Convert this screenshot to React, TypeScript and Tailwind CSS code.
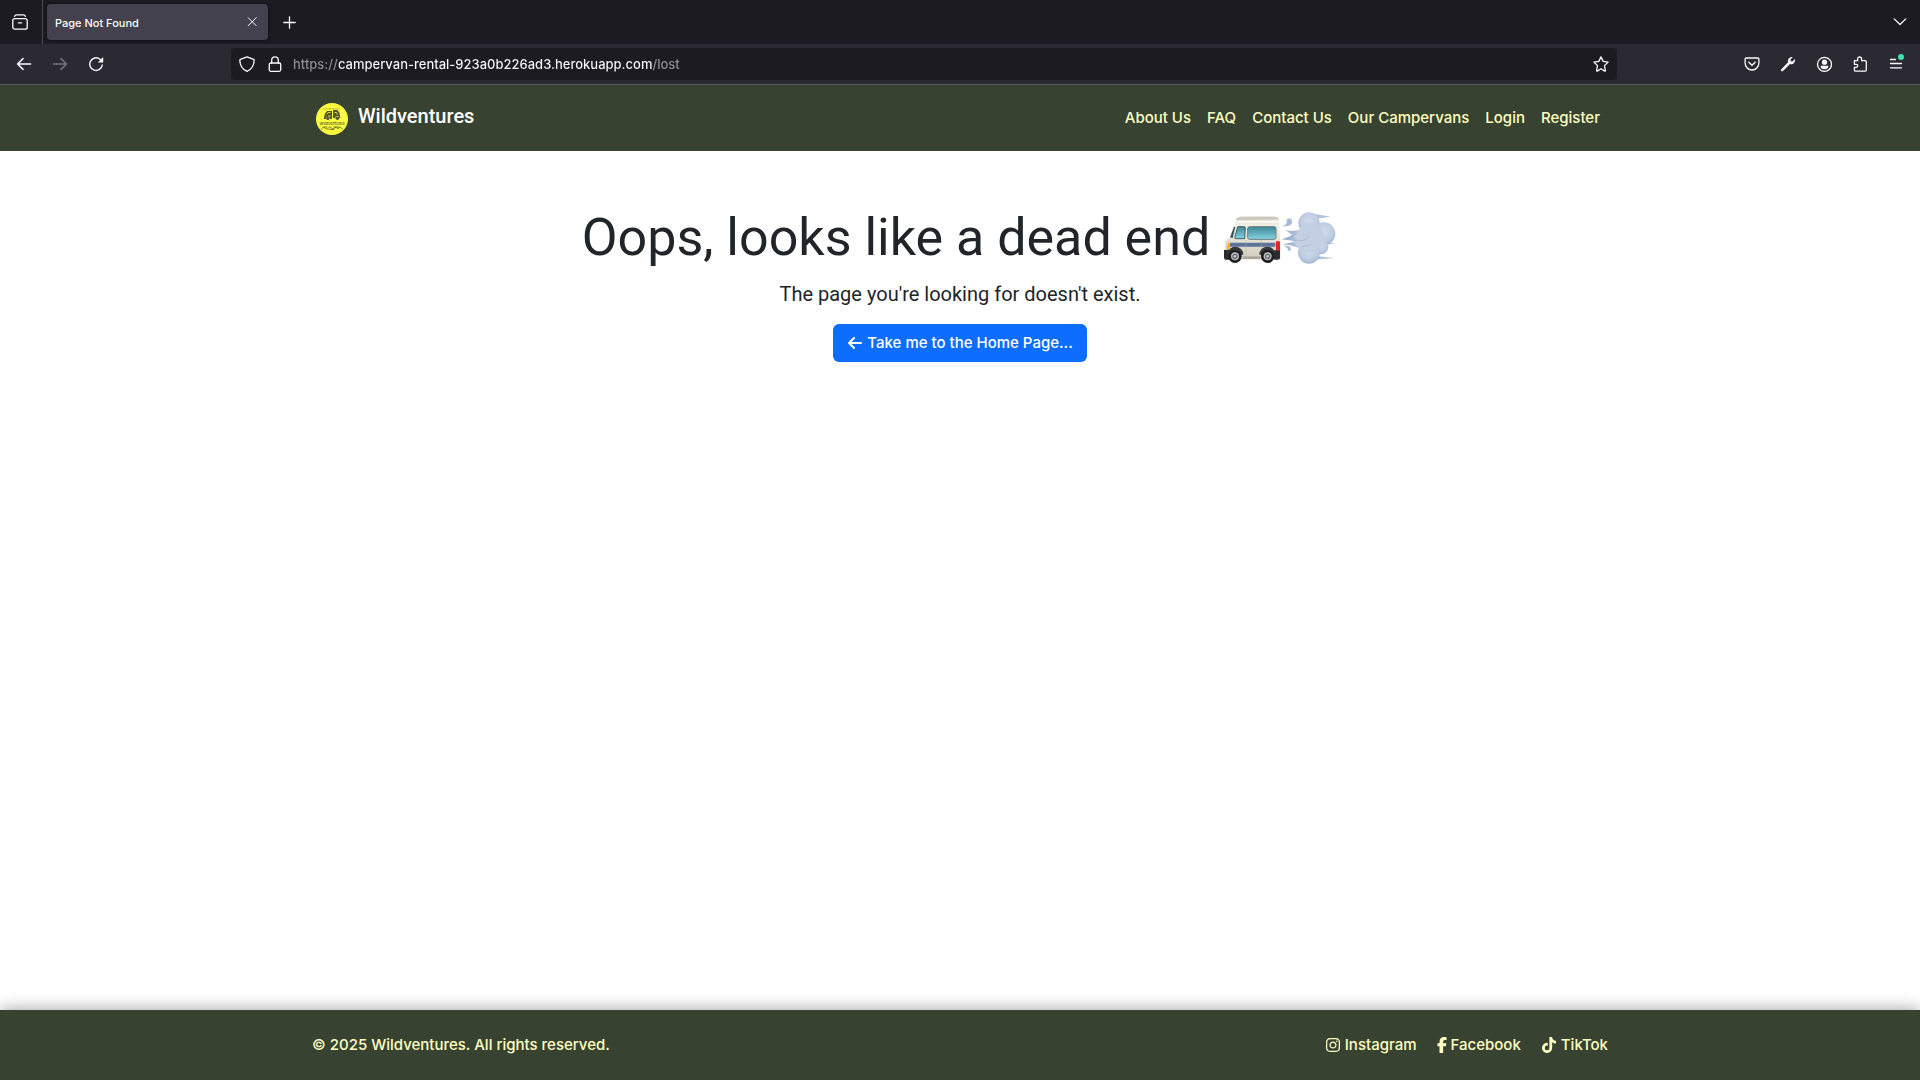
import type { ReactNode, SVGProps } from "react";
import { FaFacebookF, FaInstagram, FaTiktok } from "react-icons/fa6";

function Icon({ children, ...props }: SVGProps<SVGSVGElement> & { children: ReactNode }) {
  return (
    <svg
      viewBox="0 0 16 16"
      fill="none"
      stroke="currentColor"
      strokeWidth="1.3"
      strokeLinecap="round"
      strokeLinejoin="round"
      className="size-4 shrink-0"
      aria-hidden="true"
      {...props}
    >
      {children}
    </svg>
  );
}

function IconButton({ label, disabled, children }: { label: string; disabled?: boolean; children: ReactNode }) {
  return (
    <button
      type="button"
      aria-label={label}
      disabled={disabled}
      className="flex size-8 shrink-0 items-center justify-center rounded text-[#fbfbfe] hover:bg-white/10 disabled:text-[#77767d]"
    >
      {children}
    </button>
  );
}

function TabStrip() {
  return (
    <div className="flex h-11 items-center bg-[#1c1b22] text-[#fbfbfe]">
      <div className="flex h-full items-center border-r border-[#4a4952] pr-1.5 pl-1">
        <IconButton label="Recent browsing">
          <Icon>
            <rect x=".8" y="4.6" width="14.4" height="10.6" rx="2" />
            <path d="M2.6 2.4Q3 .8 4.6.8h6.8q1.6 0 2 1.6M6.4 8.8h3.2" />
          </Icon>
        </IconButton>
      </div>
      <div className="ml-1 flex h-9 w-[221px] items-center justify-between rounded bg-[#42414d] px-2 shadow-[0_0_3px_rgba(0,0,0,0.6)]">
        <span className="pt-0.5 text-[11px] font-medium">Page Not Found</span>
        <button type="button" aria-label="Close tab" className="flex size-4 items-center justify-center">
          <Icon strokeWidth="1">
            <path d="m4.2 3.7 8 8m0-8-8 8" />
          </Icon>
        </button>
      </div>
      <div className="ml-1.5">
        <IconButton label="New tab">
          <Icon strokeWidth="1.3">
            <path d="M7.5 2.8v11.400M1.800 8.500h11.400" />
          </Icon>
        </IconButton>
      </div>
      <div className="mr-1 ml-auto">
        <IconButton label="List all tabs">
          <Icon>
            <path d="m2.200 4.900 5.800 5.600 5.800-5.600" />
          </Icon>
        </IconButton>
      </div>
    </div>
  );
}

function Toolbar() {
  return (
    <div className="flex h-[41px] items-center border-b border-[#5b5968] bg-[#2b2a33] px-2">
      <div className="flex w-[223px] gap-1">
        <IconButton label="Back">
          <Icon strokeWidth="1.5">
            <path d="M14.600 8H1.600M7 2.600 1.600 8 7 13.400" />
          </Icon>
        </IconButton>
        <IconButton label="Forward" disabled>
          <Icon strokeWidth="1.5">
            <path d="M1.400 8h13M9 2.600 14.400 8 9 13.400" />
          </Icon>
        </IconButton>
        <IconButton label="Reload">
          <Icon strokeWidth="1.4">
            <path d="M14.300 9A6.300 6.300 0 1 1 12 3.200l1 .9" />
            <path d="M15.200 1v5.400H9.800z" fill="currentColor" stroke="none" />
          </Icon>
        </IconButton>
      </div>
      <div className="flex h-8 flex-1 items-center rounded bg-[#1c1b22] px-2 text-[#fbfbfe]">
        <button type="button" aria-label="Tracking protection" className="flex">
          <Icon>
            <path d="M8 .9 1.400 3.300c-.4.2-.6.5-.6.900C1 9.800 3.200 13.200 8 15.300c4.800-2.100 7-5.500 7.200-11.100 0-.4-.2-.7-.6-.9z" />
          </Icon>
        </button>
        <button type="button" aria-label="Site information" className="ml-3 flex">
          <Icon>
            <rect x="2.300" y="7" width="11.400" height="8.300" rx="1.500" />
            <path d="M4.700 7V4.200a3.300 3.300 0 0 1 6.600 0V7" />
          </Icon>
        </button>
        <input
          type="text"
          aria-label="Address"
          defaultValue="https://campervan-rental-923a0b226ad3.herokuapp.com/lost"
          className="ml-2.5 h-8 min-w-0 flex-1 bg-[linear-gradient(to_right,#8f8f94_45px,#fbfbfe_45px,#fbfbfe_359px,#8f8f94_359px)] bg-clip-text text-[13px] font-medium text-transparent caret-white outline-none"
        />
        <button type="button" aria-label="Bookmark this page" className="flex">
          <Icon>
            <path d="m8 .9 2.200 4.500 4.900.7-3.600 3.500.9 4.900q0 .8-.7.600L8 12.800l-3.700 2.300q-.7.200-.7-.6l.9-4.900L.9 6.100l4.900-.7z" />
          </Icon>
        </button>
      </div>
      <div className="ml-[119px] flex gap-1">
        <IconButton label="Save to Pocket">
          <Icon>
            <path d="M2.300 2h11.400c.7 0 1.200.5 1.200 1.200v3.900a6.900 6.900 0 0 1-13.800 0V3.200C1.100 2.500 1.600 2 2.300 2zM4.800 6.200 8 9.200l3.200-3" />
          </Icon>
        </IconButton>
        <IconButton label="Developer tools">
          <Icon>
            <path d="M12.900 1.100 10.500 3.500l.3 1.700 1.700.3 2.400-2.400c.5 2.300-.5 4.200-2.300 4.900-.9.300-1.800.3-2.600 0L3 14.900c-.5.5-1.300.6-1.700.1-.5-.5-.4-1.200.1-1.700L8 6.200c-.5-3 1.700-5.700 4.900-5.100z" fill="currentColor" stroke="none" />
          </Icon>
        </IconButton>
        <IconButton label="Account">
          <Icon>
            <circle cx="8.500" cy="8.300" r="7" />
            <circle cx="8.500" cy="6.200" r="2.600" fill="currentColor" stroke="none" />
            <path d="M4.700 9.800h7.600v.8a3.800 2.700 0 0 1-7.600 0z" fill="currentColor" stroke="none" />
          </Icon>
        </IconButton>
        <IconButton label="Extensions">
          <Icon>
            <path d="M2.400 4.700h3.200V3a2 2 0 0 1 4 0v1.700h3.600c.6 0 1.100.5 1.100 1.100v8.300c0 .6-.5 1.100-1.100 1.100H3.500c-.6 0-1.100-.5-1.100-1.100V11.300h1.800a1.500 1.500 0 0 0 0-3H2.400z" />
          </Icon>
        </IconButton>
        <IconButton label="Open application menu">
          <Icon overflow="visible">
            <path d="M2.500 3.500h5M2.500 7.500h11M2.500 11.800h11" />
            <circle cx="13" cy="1" r="3" fill="#3fe1b0" stroke="none" />
          </Icon>
        </IconButton>
      </div>
    </div>
  );
}

function Logo() {
  return (
    <svg viewBox="0 0 32 32" className="size-8" aria-hidden="true">
      <circle cx="16" cy="16" r="16" fill="#fbfb3f" />
      <path d="M7 5.800h17" stroke="#4b4d2c" strokeWidth=".6" opacity=".6" />
      <g fill="#55562f">
        <path d="M8 14.500 9 10.500 11 8h5v8h-2a2.200 2.200 0 0 0-4.400 0H8zM17 7h4.500l2 3 .8 5h-1a2 2 0 0 0-4 0H17z" />
        <circle cx="11.800" cy="15.400" r="1.700" />
        <circle cx="21.400" cy="15.200" r="1.700" />
      </g>
      <path d="M10.800 11.200 12 9.500h2.500M18.500 9.500h2l.8 2M12 13h2.500" fill="none" stroke="#e9e73d" strokeWidth=".9" />
      <path
        d="M5.500 26c1-2 2.500-2.500 3.500-.8s2.500 1 3.500-.4 2-1 3 .4 2.500.6 3.500-.6 2 1.600 3.500.6 2.500-1.100 4 .8M8 24h3M18 24h5M13 26.300h5"
        fill="none"
        stroke="#55562f"
        strokeWidth=".8"
        strokeLinecap="round"
      />
      <text x="16" y="21.500" textAnchor="middle" fontSize="4" fontWeight="500" fill="#55562f" className="font-['Inter',sans-serif]">
        Wildventures
      </text>
    </svg>
  );
}

const navLinks = ["About Us", "FAQ", "Contact Us", "Our Campervans", "Login", "Register"];

function Navbar() {
  return (
    <header className="bg-[#384230]">
      <nav aria-label="Main" className="mx-auto flex h-[66px] max-w-[1320px] items-center justify-between px-3">
        <a href="#home" className="ml-1 flex items-center gap-2.5 pt-0.5 text-xl font-medium text-white">
          <Logo />
          <span className="pb-1.5 font-['Roboto',sans-serif]">Wildventures</span>
        </a>
        <ul className="flex text-[15px] font-medium text-[#ffffc2]">
          {navLinks.map((label) => (
            <li key={label}>
              <a href="#page" className="block p-2">
                {label}
              </a>
            </li>
          ))}
        </ul>
      </nav>
    </header>
  );
}

function VanArt() {
  return (
    <svg viewBox="36 30 348 168" className="h-14 w-[116px] shrink-0" role="img" aria-label="Van driving away in a puff of smoke">
      <defs>
        <linearGradient id="glass" x1="0" y1="0" x2="0" y2="1">
          <stop offset="0" stopColor="#3d8794" />
          <stop offset="1" stopColor="#84d3e3" />
        </linearGradient>
        <linearGradient id="body" x1="0" y1="0" x2="0" y2="1">
          <stop offset="0" stopColor="#d9d6c9" />
          <stop offset=".2" stopColor="#f1eee3" />
          <stop offset="1" stopColor="#d2cfc1" />
        </linearGradient>
        <radialGradient id="puff" cx=".5" cy=".4" r=".6">
          <stop offset="0" stopColor="#cfdbea" />
          <stop offset=".7" stopColor="#bccbe0" />
          <stop offset="1" stopColor="#a3b6d2" />
        </radialGradient>
        <linearGradient id="jet" x1="0" y1="0" x2="1" y2="0">
          <stop offset="0" stopColor="#8da2c0" />
          <stop offset=".6" stopColor="#adbfd8" />
          <stop offset="1" stopColor="#c5d3e5" />
        </linearGradient>
      </defs>
      <path d="M82 55q4-5 14-5h98q10 0 12 9l5 66v53H47l-2-48q1-12 16-18z" fill="url(#body)" />
      <path d="M83 62h121v6H80z" fill="#fbfaf4" />
      <path d="M80 55q5-5 14-5h101q9 0 10 8l-128 2z" fill="#cbc8bc" />
      <path d="M76 80h-4L60 112l8 2z" fill="#315761" />
      <path d="M83 80h19q4 0 4 4l-2 32H77q-4 0-2-6z" fill="url(#glass)" stroke="#4b5f62" strokeWidth="3" />
      <rect x="113" y="80" width="85" height="38" rx="6" fill="url(#glass)" stroke="#6d7e7e" strokeWidth="3" />
      <path d="M60 128h136v12H58z" fill="#5d739c" />
      <path d="M108 120v58M154 120v58" stroke="#b4b1a4" strokeWidth="1.500" />
      <path d="M54 128h7l-4 24h-7z" fill="#f7ad25" />
      <path d="M198 124h12v27h-12z" fill="#e6251d" />
      <path d="M42 150h17v29H48q-6 0-6-6zM192 151h18v22q0 6-6 6h-12z" fill="#2b2c2e" />
      <path d="M98 169h53v8H98z" fill="#aaa79a" />
      <path d="M52 164a24 24 0 0 1 48 0zM148 164a24 24 0 0 1 48 0z" fill="#36373a" />
      <g>
        <circle cx="75" cy="169" r="20" fill="#1e1f21" />
        <circle cx="75" cy="169" r="12" fill="#babcc0" />
        <circle cx="75" cy="169" r="8" fill="#65686e" />
        <circle cx="75" cy="169" r="4" fill="#c7c9cc" />
        <circle cx="173" cy="169" r="20" fill="#1e1f21" />
        <circle cx="173" cy="169" r="12" fill="#babcc0" />
        <circle cx="173" cy="169" r="8" fill="#65686e" />
        <circle cx="173" cy="169" r="4" fill="#c7c9cc" />
      </g>
      <path d="M300 40q35 5 62 10l-42 6zM340 124q20 4 36 6l-36 6zM318 168l54 6-62 6z" fill="#b2c3da" />
      <path d="M226 91q30 6 56-6l-4 66q-18-14-60-18 20-4 36-8-14-5-38-7 18-6 30-13-8-8-20-14z" fill="url(#jet)" />
      <circle cx="297" cy="69" r="32" fill="url(#puff)" />
      <circle cx="342" cy="101" r="34" fill="url(#puff)" />
      <circle cx="332" cy="140" r="23" fill="url(#puff)" />
      <circle cx="297" cy="158" r="33" fill="url(#puff)" />
      <path d="M266 90q22-26 50-18 28 8 24 42-4 34-28 42-30 3-44-12l-18-16q12-2 14-8-10-4-14-10 14-4 16-20z" fill="#c3d0e3" />
      <path d="M266 122q20 2 30-13M278 139q16 1 25-7" fill="none" stroke="#a9bbd4" strokeWidth="3" strokeLinecap="round" />
      <path d="M217 78q10-2 13-9-2-13 7-14 10 1 9 13-4 13-29 10zM222 138q14-2 18 3 6 8-1 12-8-1-6-8z" fill="#a9bbd6" />
    </svg>
  );
}

function NotFound() {
  return (
    <main className="flex flex-1 flex-col items-center bg-white px-4 pt-[52px] text-[#212529]">
      <h1 className="flex items-center gap-3 font-['Roboto',sans-serif] text-[52px] leading-[70px]">
        <span>Oops, looks like a dead end</span>
        <VanArt />
      </h1>
      <p className="mt-1.5 font-['Roboto',sans-serif] text-xl leading-[30px]">The page you're looking for doesn't exist.</p>
      <a href="#home" className="mt-[15px] flex h-[38px] items-center gap-1 rounded-md bg-[#0d6efd] px-3.5 text-[15px] font-medium text-white">
        <Icon strokeWidth="2">
          <path d="M14 8H2M7 3 2 8l5 5" />
        </Icon>
        Take me to the Home Page...
      </a>
    </main>
  );
}

function Footer() {
  return (
    <footer className="bg-[#384230] text-[15px] font-medium text-[#ffffc2] shadow-[0_0_16px_rgba(0,0,0,0.4)]">
      <div className="mx-auto flex h-[70px] max-w-[1320px] items-center justify-between px-3">
        <p>© 2025 Wildventures. All rights reserved.</p>
        <ul className="flex gap-5">
          <li>
            <a href="#instagram" className="flex items-center gap-1">
              <FaInstagram className="size-4" aria-hidden="true" /> Instagram
            </a>
          </li>
          <li>
            <a href="#facebook" className="flex items-center gap-1">
              <FaFacebookF className="h-4 w-2.5" aria-hidden="true" /> Facebook
            </a>
          </li>
          <li>
            <a href="#tiktok" className="flex items-center gap-1">
              <FaTiktok className="size-4" aria-hidden="true" /> TikTok
            </a>
          </li>
        </ul>
      </div>
    </footer>
  );
}

export default function App() {
  return (
    <div className="flex min-h-screen flex-col font-['Inter',sans-serif]">
      <TabStrip />
      <Toolbar />
      <Navbar />
      <NotFound />
      <Footer />
    </div>
  );
}
